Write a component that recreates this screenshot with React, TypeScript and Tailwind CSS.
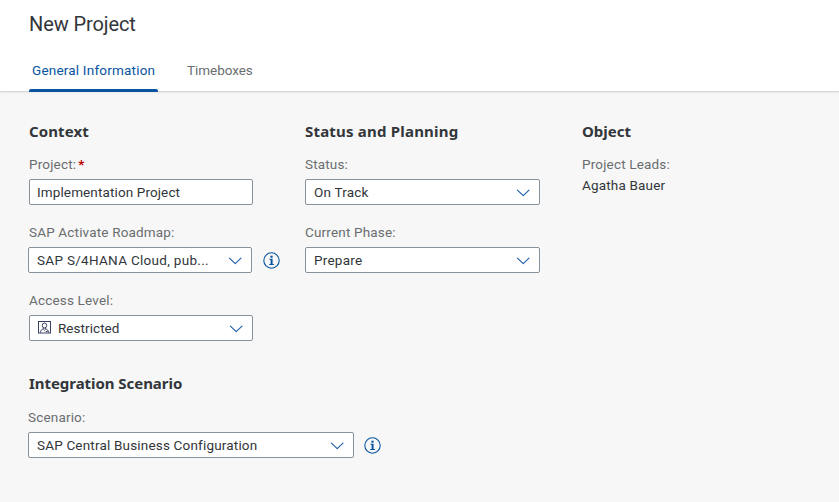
import type { ReactNode } from "react";

function Chevron() {
  return (
    <svg className="relative top-px mr-[9px] h-2 w-[14px] shrink-0" viewBox="0 0 14 8" fill="none" stroke="#1c5fa8" strokeWidth="1.15" strokeLinecap="round" strokeLinejoin="round">
      <path d="M1.4 1.2 L7.2 6.6 L13 1.2" />
    </svg>
  );
}

function InfoIcon() {
  return (
    <svg className="h-[17px] w-[17px] shrink-0" viewBox="0 0 17 17" fill="none">
      <circle cx="8.5" cy="8.5" r="7.7" stroke="#0854a0" strokeWidth="1.1" />
      <path d="M6.4 6.8h3.2v5.3h1.3v1H6.2v-1h1.4V7.8H6.4z" fill="#0854a0" />
      <rect x="7.4" y="3.7" width="2.2" height="2" fill="#0854a0" />
    </svg>
  );
}

function PersonIcon() {
  return (
    <svg className="relative -top-px mr-[7px] h-[13px] w-[13px] shrink-0" viewBox="0 0 13 13" fill="none" stroke="#3b4166" strokeWidth="1">
      <rect x="0.5" y="0.5" width="12" height="11.5" />
      <ellipse cx="6.5" cy="4.5" rx="2.2" ry="2.5" />
      <path d="M2.4 11.6c.2-2.2 1.2-3.2 3-3.7v-1M10.6 11.6c-.2-2.2-1.2-3.2-3-3.7v-1M5.4 8.3l1.1 1 1.1-1M7.7 10.5h2" />
    </svg>
  );
}

function Heading({ children, className = "" }: { children: ReactNode; className?: string }) {
  return <h2 className={`h-6 whitespace-nowrap font-['Noto_Sans',sans-serif] text-[15px] font-bold leading-[22px] text-[#32363a] ${className}`}>{children}</h2>;
}

function Label({ children, className = "" }: { children: ReactNode; className?: string }) {
  return <div className={`h-[18px] whitespace-nowrap text-[13.5px] leading-[18px] tracking-[0.17px] text-[#6a6d70] ${className}`}>{children}</div>;
}

function Field({ children, className = "" }: { children: ReactNode; className?: string }) {
  return (
    <div className={`mt-1.5 flex h-[26px] shrink-0 items-center justify-between rounded-[2px] border border-[#89919a] bg-white text-[13.5px] leading-[18px] text-[#32363a] ${className}`}>
      {children}
    </div>
  );
}

export default function App() {
  return (
    <div className="h-[502px] w-[839px] overflow-hidden bg-[#f7f7f7] font-['Roboto',sans-serif]">
      <header className="flex h-[92px] flex-col justify-between border-b border-[#d6d6d6] bg-white pl-[29px] shadow-[0_1px_2px_rgba(0,0,0,0.06)]">
        <h1 className="pt-[10px] text-[20px] leading-7 tracking-[-0.1px] text-[#32363a]">New Project</h1>
        <nav className="-mb-px flex h-[33px] text-[13.5px] leading-[22px] tracking-[0.2px]">
          <div className="flex w-[129px] flex-col justify-between whitespace-nowrap text-[#0854a0]">
            <span className="pl-[3px]">General Information</span>
            <div className="h-[3px] rounded-t-[2px] bg-[#0854a0]" />
          </div>
          <div className="ml-[29px] tracking-[-0.05px] text-[#6a6d70]">Timeboxes</div>
        </nav>
      </header>

      <main className="pl-[29px] pt-7">
        <div className="flex">
          <section className="w-[276px]">
            <Heading className="tracking-[0.1px]">Context</Heading>
            <Label className="mt-[11px]">Project:<span className="ml-0.5 font-bold text-[#bb0000]">*</span></Label>
            <Field className="w-[224px] pl-[7px]"><span className="tracking-[0.12px]">Implementation Project</span></Field>

            <Label className="mt-[18px]">SAP Activate Roadmap:</Label>
            <div className="-ml-px flex items-center">
              <Field className="w-[224px] pl-2"><span className="tracking-[0.3px]">SAP S/4HANA Cloud, pub...</span><Chevron /></Field>
              <div className="ml-[11px] mt-1.5"><InfoIcon /></div>
            </div>

            <Label className="mt-[18px]">Access Level:</Label>
            <Field className="w-[224px] pl-2"><span className="flex items-center tracking-[0.05px]"><PersonIcon />Restricted</span><Chevron /></Field>
          </section>

          <section className="w-[277px]">
            <Heading className="tracking-[0.2px]">Status and Planning</Heading>
            <Label className="mt-[11px]">Status:</Label>
            <Field className="w-[235px] pl-2"><span className="tracking-[0.2px]">On Track</span><Chevron /></Field>
            <Label className="mt-[18px]">Current Phase:</Label>
            <Field className="w-[235px] pl-2"><span className="tracking-[0.25px]">Prepare</span><Chevron /></Field>
          </section>

          <section>
            <Heading>Object</Heading>
            <Label className="mt-[11px]">Project Leads:</Label>
            <div className="mt-[3px] whitespace-nowrap text-[13.5px] leading-[18px] tracking-[0.17px] text-[#32363a]">Agatha Bauer</div>
          </section>
        </div>

        <section className="mt-[31px]">
          <Heading className="tracking-[-0.05px]">Integration Scenario</Heading>
          <Label className="-ml-px mt-3">Scenario:</Label>
          <div className="-ml-px flex items-center">
            <Field className="w-[326px] pl-2"><span className="tracking-[0.18px]">SAP Central Business Configuration</span><Chevron /></Field>
            <div className="ml-[10px] mt-1.5"><InfoIcon /></div>
          </div>
        </section>
      </main>
    </div>
  );
}
